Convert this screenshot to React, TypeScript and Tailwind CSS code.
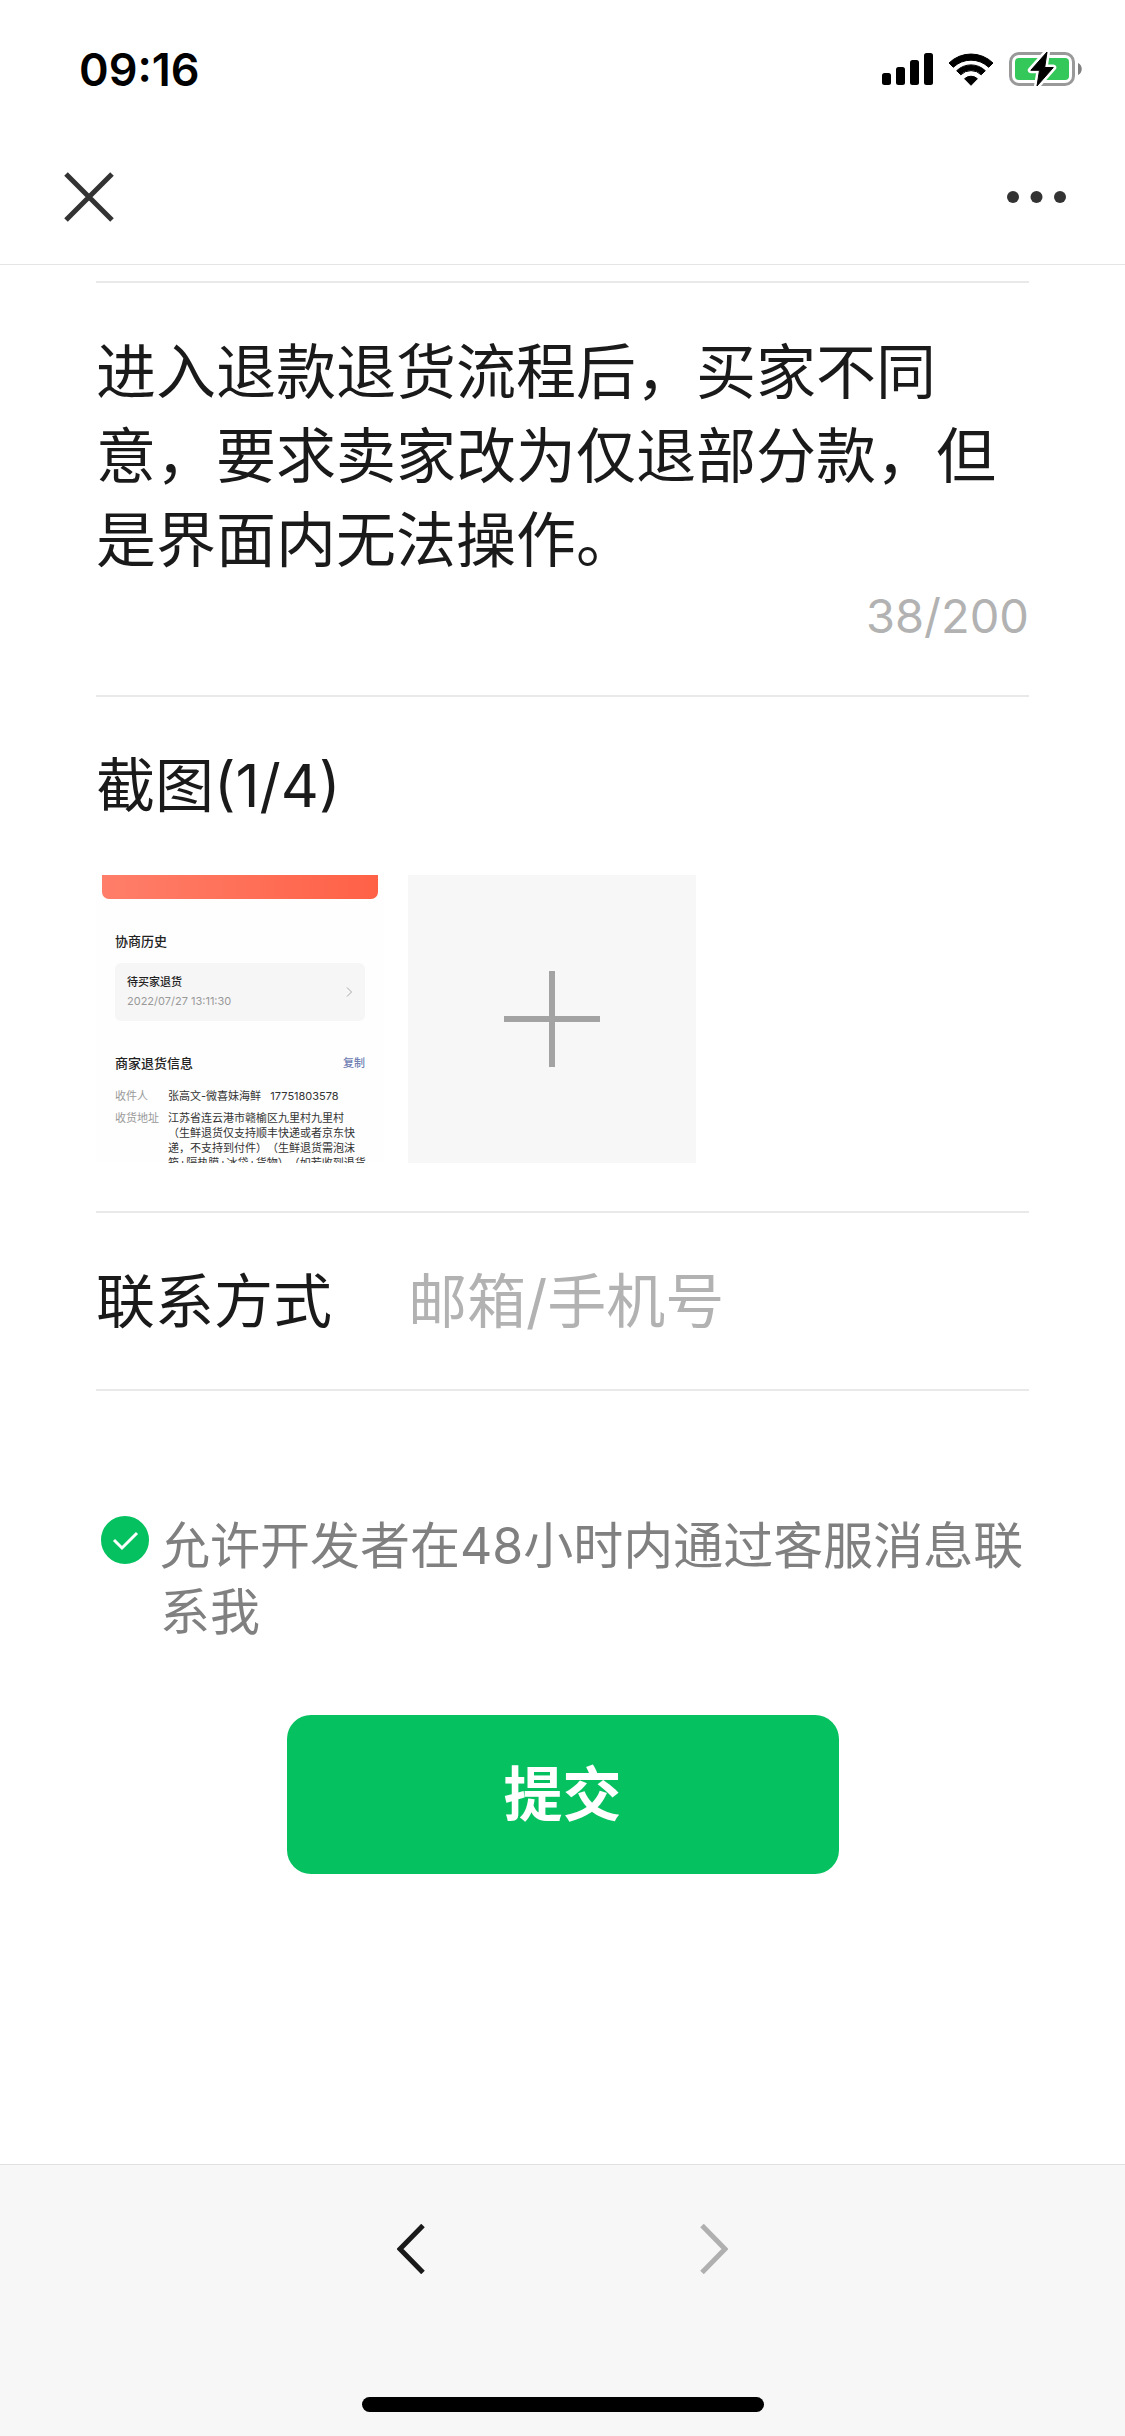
import React, { useState } from 'react';

const MAX_LENGTH = 200;
const MAX_SHOTS = 4;

const StatusIcons = () => (
  <div className="flex items-center gap-[15px]">
    {/* Signal */}
    <svg width="51" height="32" viewBox="0 0 51 32" aria-hidden="true">
      <rect x="0" y="20" width="9" height="12" rx="2.5" />
      <rect x="14" y="14" width="9" height="18" rx="2.5" />
      <rect x="28" y="7" width="9" height="25" rx="2.5" />
      <rect x="42" y="0" width="9" height="32" rx="2.5" />
    </svg>
    {/* Wifi */}
    <svg width="46" height="33" viewBox="0 0 46 33" stroke="#000" strokeWidth="1" strokeLinejoin="round" aria-hidden="true">
      <path d="M1 10 A31.5 31.5 0 0 1 45 10 L40.7 14.3 A25.5 25.5 0 0 0 5.3 14.3 Z" />
      <path d="M8.7 17.7 A20.5 20.5 0 0 1 37.3 17.7 L33.2 21.8 A14.5 14.5 0 0 0 12.8 21.8 Z" />
      <path d="M23 32.3 L16.6 25.7 A9.5 9.5 0 0 1 29.4 25.7 Z" />
    </svg>
    {/* Battery, charging */}
    <svg width="73" height="36" viewBox="0 0 73 36" aria-hidden="true">
      <rect x="1.5" y="2.5" width="63" height="31" rx="8.5" fill="none" stroke="#999" strokeWidth="3" />
      <rect x="6" y="7" width="54" height="22" rx="4" fill="#34c759" />
      <path d="M69 12 C74 14 74 22 69 24 Z" fill="#808080" />
      <path
        d="M38 1 L21.8 19.3 H30.5 L28 35 L44.3 16.5 H35.7 Z"
        fill="#fff"
        stroke="#fff"
        strokeWidth="6"
        strokeLinejoin="round"
      />
      <path d="M38 1 L21.8 19.3 H30.5 L28 35 L44.3 16.5 H35.7 Z" stroke="#000" strokeWidth="1" strokeLinejoin="round" />
    </svg>
  </div>
);

const Screenshot = () => (
  <div className="size-72 overflow-hidden bg-[#fefefe] text-[11px] leading-[15px] text-[#333] whitespace-nowrap [text-spacing-trim:space-all]">
    <div className="mx-1.5 h-6 rounded-b-[7px] bg-linear-to-r from-[#ff7e69] to-[#ff6146]" />
    <div className="px-[19px]">
      <h3 className="mt-8 text-[13px] leading-5 font-medium text-[#222]">协商历史</h3>
      <div className="mt-3 flex items-center justify-between rounded-md bg-[#f6f6f6] px-3 py-2.5 leading-[19px]">
        <div>
          <p className="font-medium text-[#222]">待买家退货</p>
          <p className="text-[#999]">2022/07/27 13:11:30</p>
        </div>
        <svg width="7" height="12" viewBox="0 0 7 12" fill="none" stroke="#a8a8a8" aria-hidden="true">
          <path d="M1 1.5 L5.5 6 L1 10.5" />
        </svg>
      </div>
      <div className="mt-8 flex items-center justify-between leading-5">
        <h3 className="text-[13px] font-medium text-[#222]">商家退货信息</h3>
        <span className="font-medium text-[#7080b3]">复制</span>
      </div>
      <dl className="mt-4 flex flex-col gap-[7px]">
        <div className="flex">
          <dt className="w-[53px] shrink-0 text-[#999]">收件人</dt>
          <dd className="whitespace-pre">张高文-微喜妹海鲜{'   '}17751803578</dd>
        </div>
        <div className="flex">
          <dt className="w-[53px] shrink-0 text-[#999]">收货地址</dt>
          <dd>
            江苏省连云港市赣榆区九里村九里村
            <br />
            （生鲜退货仅支持顺丰快递或者京东快
            <br />
            递，不支持到付件）（生鲜退货需泡沫
            <br />
            箱+隔热膜+冰袋+货物）（如若收到退货
          </dd>
        </div>
      </dl>
    </div>
  </div>
);

export default function App() {
  const [description, setDescription] = useState(
    '进入退款退货流程后，买家不同意，要求卖家改为仅退部分款，但是界面内无法操作。'
  );
  const [contact, setContact] = useState('');
  const [allowContact, setAllowContact] = useState(true);

  return (
    <div
      lang="zh-CN"
      className="flex min-h-screen flex-col bg-white font-['Inter','Noto_Sans_CJK_SC',sans-serif] text-[59px] leading-[84px] text-[#1a1a1a]"
    >
      <header className="border-b border-[#e5e5e5]">
        <div className="flex h-[132px] items-center justify-between pt-1.5 pr-[43px] pl-[79px]">
          <time className="text-[45px] leading-none font-semibold text-black">09:16</time>
          <StatusIcons />
        </div>
        <nav className="flex h-[132px] items-center justify-between pr-[59px] pb-0.5 pl-16">
          <button type="button" aria-label="关闭">
            <svg width="50" height="50" viewBox="0 0 50 50" fill="none" stroke="#333" strokeWidth="5">
              <path d="M2 2 L48 48 M48 2 L2 48" />
            </svg>
          </button>
          <button type="button" aria-label="更多">
            <svg width="59" height="12" viewBox="0 0 59 12" fill="#333">
              <circle cx="6" cy="6" r="6" />
              <circle cx="29.5" cy="6" r="6" />
              <circle cx="53" cy="6" r="6" />
            </svg>
          </button>
        </nav>
      </header>

      <main className="px-24 pt-4">
        <section className="border-y-2 border-[#e9e9e9] pt-[47px] pb-[45px]">
          <textarea
            aria-label="问题描述"
            rows={3}
            maxLength={MAX_LENGTH}
            value={description}
            onChange={(e) => setDescription(e.target.value)}
            className="block w-full resize-none overflow-hidden text-[60px] outline-none"
          />
          <p className="text-right text-[47px] leading-[68px] text-[#b2b2b2]">
            {description.length}/{MAX_LENGTH}
          </p>
        </section>

        <section className="border-b-2 border-[#e9e9e9] pt-[47px] pb-12">
          <h2>截图(1/{MAX_SHOTS})</h2>
          <div className="mt-[47px] flex gap-6">
            <Screenshot />
            <button type="button" aria-label="添加截图" className="flex size-72 items-center justify-center bg-[#f7f7f7]">
              <svg width="96" height="96" viewBox="0 0 96 96" stroke="#a3a3a3" strokeWidth="6">
                <path d="M48 0 V96 M0 48 H96" />
              </svg>
            </button>
          </div>
        </section>

        <div className="flex border-b-2 border-[#e9e9e9] pt-[47px] pb-[45px]">
          <label htmlFor="contact" className="w-[312px] shrink-0">
            联系方式
          </label>
          <input
            id="contact"
            type="text"
            placeholder="邮箱/手机号"
            value={contact}
            onChange={(e) => setContact(e.target.value)}
            className="h-[84px] min-w-0 flex-1 outline-none placeholder:text-[#b2b2b2]"
          />
        </div>

        <label className="mt-[122px] flex items-start gap-[11px] pl-[5px] text-[50px] leading-[66px] text-[#808080]">
          <span className="relative mt-[3px] size-12 shrink-0">
            <input
              type="checkbox"
              checked={allowContact}
              onChange={(e) => setAllowContact(e.target.checked)}
              className="peer block size-12 appearance-none rounded-full border-2 border-[#c8c8c8] checked:border-[#05c160] checked:bg-[#05c160]"
            />
            <svg
              viewBox="0 0 48 48"
              fill="none"
              stroke="#fff"
              strokeWidth="3"
              className="pointer-events-none absolute inset-0 hidden peer-checked:block"
            >
              <path d="M13 24 L21 32 L36 17" />
            </svg>
          </span>
          <span>允许开发者在48小时内通过客服消息联系我</span>
        </label>

        <button
          type="button"
          className="mx-auto mt-[70px] block h-[159px] w-[552px] rounded-3xl bg-[#05c160] font-bold text-white"
        >
          提交
        </button>
      </main>

      <footer className="mt-auto border-t border-[#e0e0e0] bg-[#f7f7f7] pt-[59px] pb-6">
        <div className="flex justify-center gap-[275px]">
          <button type="button" aria-label="后退">
            <svg width="28" height="50" viewBox="0 0 28 50" fill="none" stroke="#1a1a1a" strokeWidth="5">
              <path d="M26 1.5 L3 25 L26 48.5" />
            </svg>
          </button>
          <button type="button" aria-label="前进" disabled>
            <svg width="28" height="50" viewBox="0 0 28 50" fill="none" stroke="#b0b0b0" strokeWidth="5">
              <path d="M2 1.5 L25 25 L2 48.5" />
            </svg>
          </button>
        </div>
        <div className="mx-auto mt-[123px] h-[15px] w-[402px] rounded-full bg-black" />
      </footer>
    </div>
  );
}
